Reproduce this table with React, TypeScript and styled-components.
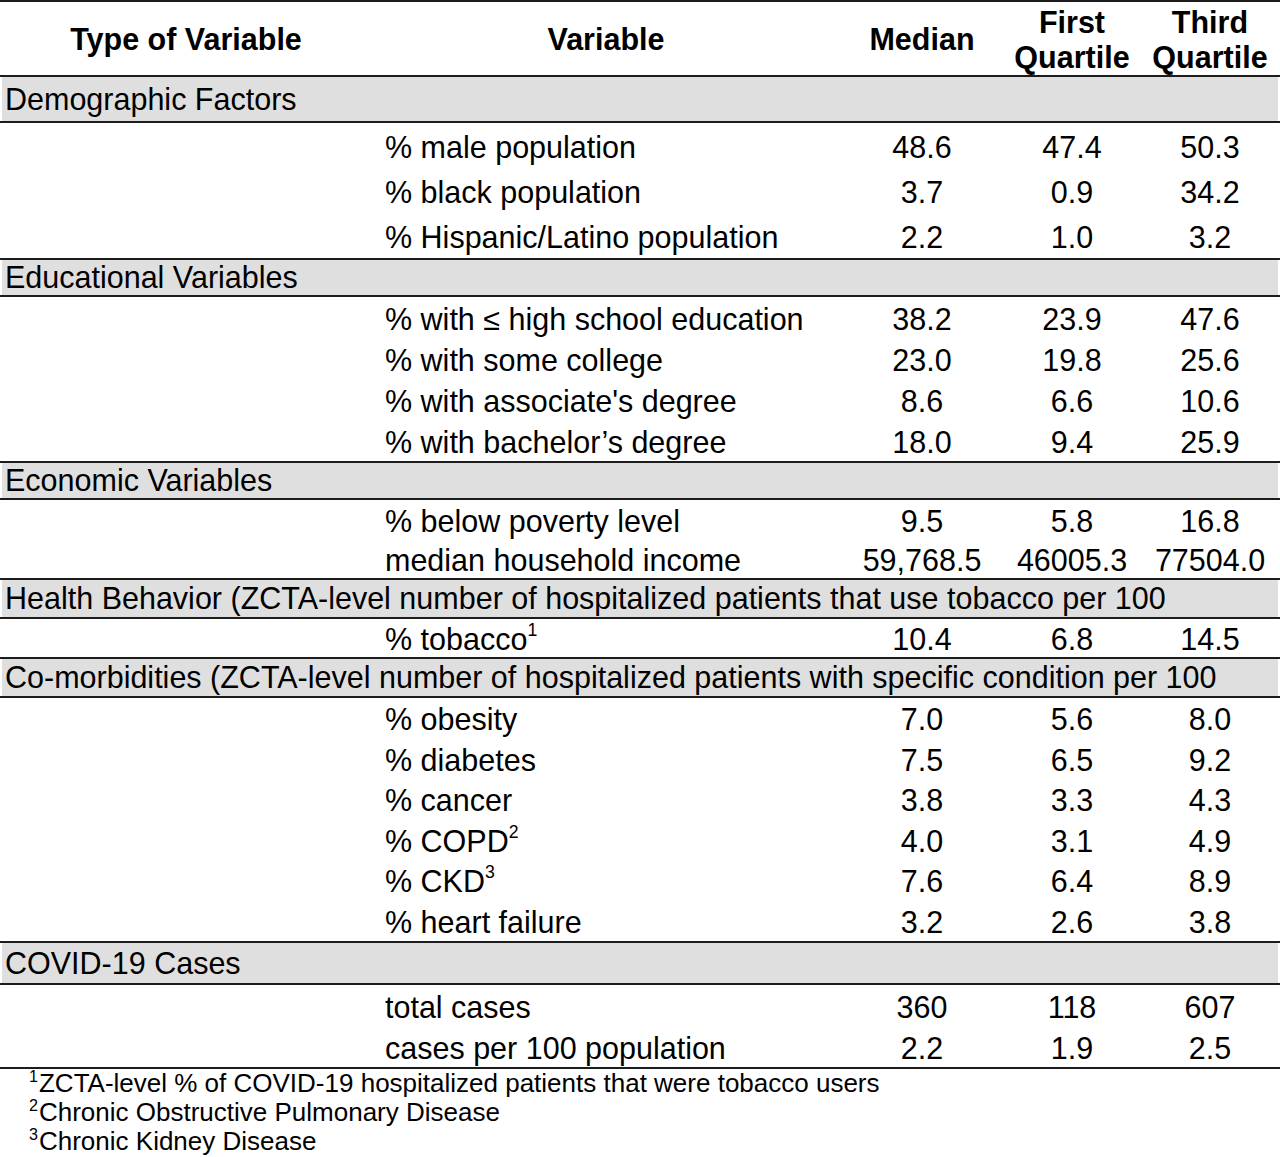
import React from "react";
import styled, { createGlobalStyle } from "styled-components";

const GlobalStyle = createGlobalStyle`
	html, body {
		margin: 0;
		padding: 0;
		background: #ffffff;
	}
	body {
		font-family: "Liberation Sans", Arial, sans-serif;
		color: #000000;
	}
`;

const COLS = "372px 468px 164px 136px 140px";

const Page = styled.div`
	width: 1280px;
	font-size: 30.5px;
`;

const HeaderRow = styled.div`
	display: grid;
	grid-template-columns: ${COLS};
	height: 75px;
	padding-top: 2px;
	box-sizing: border-box;
	border-top: 2px solid #1c1c1c;
	font-weight: bold;
	line-height: 35px;
`;

const HeadCell = styled.div`
	display: flex;
	align-items: center;
	justify-content: center;
	text-align: center;
	white-space: nowrap;
`;

const SectionRow = styled.div<{ $h: number }>`
	border-top: 2px solid #1c1c1c;
	border-bottom: 2px solid #1c1c1c;
	height: ${({ $h }) => $h}px;
	display: flex;
`;

const SectionFill = styled.div`
	flex: 1;
	margin: 0 2px;
	background: #dfdfdf;
	display: flex;
	align-items: center;
	padding-left: 3px;
	white-space: nowrap;
`;

const DataRow = styled.div<{ $h: number }>`
	display: grid;
	grid-template-columns: ${COLS};
	height: ${({ $h }) => $h}px;
	box-sizing: border-box;
	padding-top: 3px;
	align-items: center;
`;

const VarCell = styled.div`
	grid-column: 2;
	padding-left: 13px;
	white-space: nowrap;
`;

const NumCell = styled.div`
	text-align: center;
	white-space: nowrap;
`;

const Sup = styled.sup`
	font-size: 0.58em;
	line-height: 0;
	vertical-align: 0.8em;
`;

const TableEnd = styled.div`
	border-top: 2px solid #1c1c1c;
`;

const Notes = styled.div`
	padding: 0 0 0 29px;
	font-size: 26px;
	line-height: 29px;
`;

const NoteSup = styled.sup`
	font-size: 0.62em;
	line-height: 0;
	vertical-align: 0.6em;
	margin-right: 1px;
`;

type Row = { name: React.ReactNode; med: string; q1: string; q3: string };
type Section = { title: string; head: number; row: number; rows: Row[] };

const sections: Section[] = [
	{
		title: "Demographic Factors",
		head: 44,
		row: 45,
		rows: [
			{ name: "% male population", med: "48.6", q1: "47.4", q3: "50.3" },
			{ name: "% black population", med: "3.7", q1: "0.9", q3: "34.2" },
			{ name: "% Hispanic/Latino population", med: "2.2", q1: "1.0", q3: "3.2" },
		],
	},
	{
		title: "Educational Variables",
		head: 35,
		row: 41,
		rows: [
			{ name: "% with \u2264 high school education", med: "38.2", q1: "23.9", q3: "47.6" },
			{ name: "% with some college", med: "23.0", q1: "19.8", q3: "25.6" },
			{ name: "% with associate's degree", med: "8.6", q1: "6.6", q3: "10.6" },
			{ name: "% with bachelor\u2019s degree", med: "18.0", q1: "9.4", q3: "25.9" },
		],
	},
	{
		title: "Economic Variables",
		head: 35,
		row: 39,
		rows: [
			{ name: "% below poverty level", med: "9.5", q1: "5.8", q3: "16.8" },
			{ name: "median household income", med: "59,768.5", q1: "46005.3", q3: "77504.0" },
		],
	},
	{
		title: "Health Behavior (ZCTA-level number of hospitalized patients that use tobacco per 100",
		head: 37,
		row: 38,
		rows: [
			{
				name: (
					<>
						% tobacco<Sup>1</Sup>
					</>
				),
				med: "10.4",
				q1: "6.8",
				q3: "14.5",
			},
		],
	},
	{
		title: "Co-morbidities (ZCTA-level number of hospitalized patients with specific condition per 100",
		head: 37,
		row: 40.5,
		rows: [
			{ name: "% obesity", med: "7.0", q1: "5.6", q3: "8.0" },
			{ name: "% diabetes", med: "7.5", q1: "6.5", q3: "9.2" },
			{ name: "% cancer", med: "3.8", q1: "3.3", q3: "4.3" },
			{
				name: (
					<>
						% COPD<Sup>2</Sup>
					</>
				),
				med: "4.0",
				q1: "3.1",
				q3: "4.9",
			},
			{
				name: (
					<>
						% CKD<Sup>3</Sup>
					</>
				),
				med: "7.6",
				q1: "6.4",
				q3: "8.9",
			},
			{ name: "% heart failure", med: "3.2", q1: "2.6", q3: "3.8" },
		],
	},
	{
		title: "COVID-19 Cases",
		head: 40,
		row: 41,
		rows: [
			{ name: "total cases", med: "360", q1: "118", q3: "607" },
			{ name: "cases per 100 population", med: "2.2", q1: "1.9", q3: "2.5" },
		],
	},
];

const App = () => (
	<Page>
		<GlobalStyle />
		<HeaderRow>
			<HeadCell>Type of Variable</HeadCell>
			<HeadCell>Variable</HeadCell>
			<HeadCell>Median</HeadCell>
			<HeadCell>
				First
				<br />
				Quartile
			</HeadCell>
			<HeadCell>
				Third
				<br />
				Quartile
			</HeadCell>
		</HeaderRow>
		{sections.map((s) => (
			<React.Fragment key={s.title}>
				<SectionRow $h={s.head}>
					<SectionFill>{s.title}</SectionFill>
				</SectionRow>
				{s.rows.map((r, j) => (
					<DataRow key={j} $h={s.row}>
						<VarCell>{r.name}</VarCell>
						<NumCell>{r.med}</NumCell>
						<NumCell>{r.q1}</NumCell>
						<NumCell>{r.q3}</NumCell>
					</DataRow>
				))}
			</React.Fragment>
		))}
		<TableEnd />
		<Notes>
			<div>
				<NoteSup>1</NoteSup>ZCTA-level % of COVID-19 hospitalized patients that were tobacco users
			</div>
			<div>
				<NoteSup>2</NoteSup>Chronic Obstructive Pulmonary Disease
			</div>
			<div>
				<NoteSup>3</NoteSup>Chronic Kidney Disease
			</div>
		</Notes>
	</Page>
);

export default App;
